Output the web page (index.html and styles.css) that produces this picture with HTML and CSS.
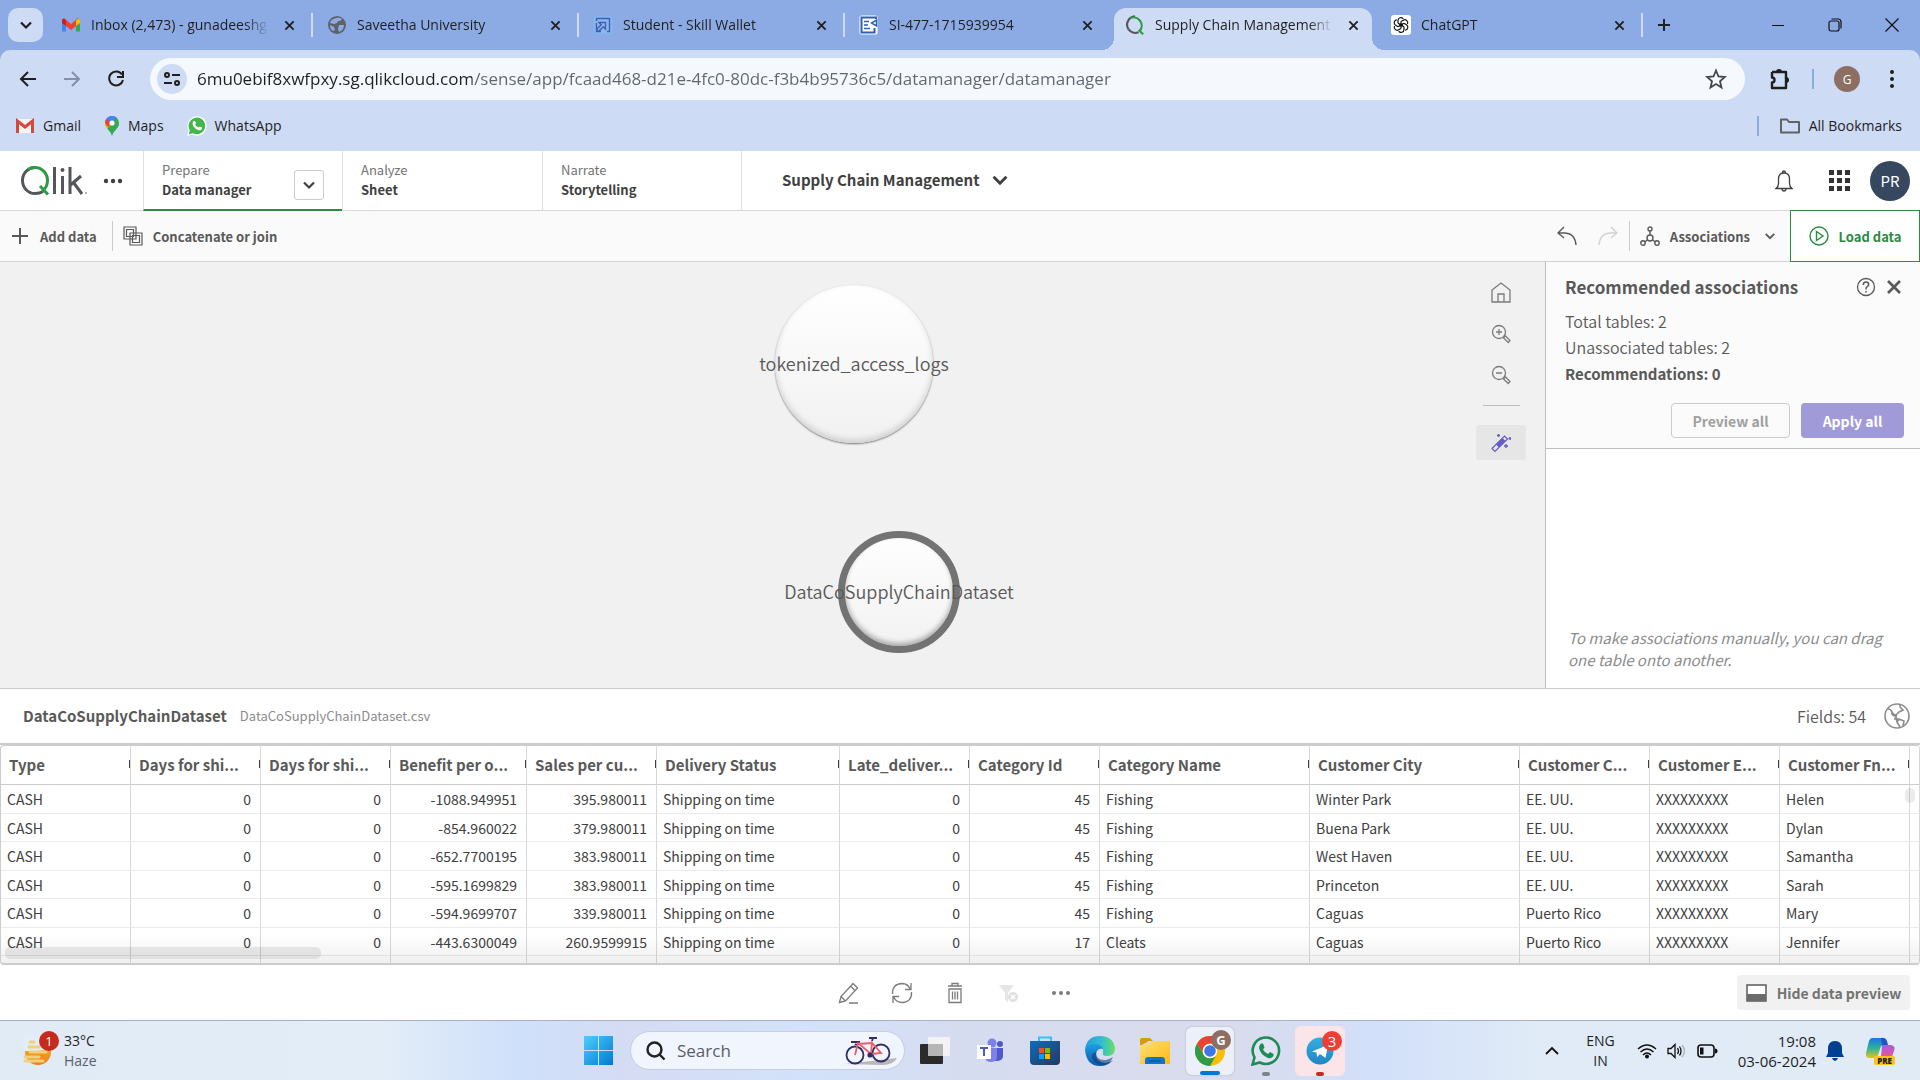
FILE: index.html
```html
<!DOCTYPE html>
<html lang="en">
<head>
<meta charset="utf-8">
<title>Supply Chain Management</title>
<link rel="stylesheet" href="styles.css">
</head>
<body>
<svg class="defs" aria-hidden="true">
  <symbol id="x" viewBox="0 0 12 12"><path d="M1.5 1.5l9 9M10.5 1.5l-9 9" fill="none" stroke="currentColor" stroke-width="2"/></symbol>
  <symbol id="down" viewBox="0 0 14 14"><path d="M2 4.5l5 5 5-5" fill="none" stroke="currentColor" stroke-width="2.2"/></symbol>
  <symbol id="qring" viewBox="0 0 28 28"><path d="M5 20A11.5 11.5 0 0 1 14 2" fill="none" stroke="#54565b" stroke-width="3"/><path d="M5 20A11.5 11.5 0 0 0 19 24" fill="none" stroke="#54565b" stroke-width="3"/><path d="M7 4.5A11.5 11.5 0 0 1 20 23M19 21l6.500 6" fill="none" stroke="#2f9a45" stroke-width="3"/></symbol>
  <linearGradient id="win" x1="0" y1="0" x2="1" y2="1"><stop offset="0" stop-color="#4cd0fb"/><stop offset="1" stop-color="#0078d4"/></linearGradient>
  <linearGradient id="store" x1="0" y1="0" x2="1" y2="1"><stop offset="0" stop-color="#0f6cbd"/><stop offset="1" stop-color="#243a5e"/></linearGradient>
  <linearGradient id="edge1" x1="0" y1="0" x2="1" y2="0"><stop offset="0" stop-color="#2499e6"/><stop offset=".6" stop-color="#35c1c9"/><stop offset="1" stop-color="#6be05c"/></linearGradient>
  <linearGradient id="edge2" x1="0" y1="0" x2="0" y2="1"><stop offset="0" stop-color="#1f9de6"/><stop offset="1" stop-color="#0c59a4"/></linearGradient>
  <linearGradient id="fold" x1="0" y1="0" x2="1" y2="1"><stop offset="0" stop-color="#ffe07a"/><stop offset="1" stop-color="#fdb913"/></linearGradient>
  <linearGradient id="tele" x1="0" y1="0" x2="0" y2="1"><stop offset="0" stop-color="#37aee2"/><stop offset="1" stop-color="#1e87c4"/></linearGradient>
  <linearGradient id="cop1" x1="0" y1="0" x2="0" y2="1"><stop offset="0" stop-color="#1b74e4"/><stop offset=".5" stop-color="#2bb39b"/><stop offset="1" stop-color="#e3c51c"/></linearGradient>
  <linearGradient id="cop2" x1="0" y1="0" x2="0" y2="1"><stop offset="0" stop-color="#a45de0"/><stop offset=".6" stop-color="#e8569b"/><stop offset="1" stop-color="#f78f3e"/></linearGradient>
  <linearGradient id="sun" x1="0" y1="0" x2="0" y2="1"><stop offset="0" stop-color="#f8b92a"/><stop offset="1" stop-color="#ef7d1a"/></linearGradient>
</svg>

<header class="browser">
  <div class="tabstrip">
    <button class="tab-search" aria-label="Search tabs"><svg width="14" height="14"><use href="#down"/></svg></button>
    <div class="tabs">
      <div class="tab">
        <svg width="20" height="16" viewBox="0 0 20 16"><path d="M1 3v11.500h4V7z" fill="#4285f4"/><path d="M19 3v11.500h-4V7z" fill="#34a853"/><path d="M1 3v3l9 7 9-7V3l-2-2-7 6-7-6z" fill="#ea4335"/><path d="M15 3.500V9l4-3V3q-1.500-2.500-4 .5z" fill="#fbbc04"/><path d="M5 3.500V9L1 6V3q1.500-2.500 4 .5z" fill="#c5221f"/></svg>
        <span class="tab-title">Inbox (2,473) - gunadeeshg</span><button class="tab-close" aria-label="Close tab"><svg width="11" height="11"><use href="#x"/></svg></button>
      </div>
      <span class="tab-divider"></span>
      <div class="tab">
        <svg width="20" height="20" viewBox="0 0 20 20"><circle cx="10" cy="10" r="9" fill="#5f6368"/><path d="M9 3q4-1 6 1l-2 2-2 0-1 2-3 1-4-1q1-4 6-5zM12 10l5 0q0 5-5 7l-1-3zM3 10l4 2 1 3-2 1q-3-2-3-6z" fill="#8cabe4"/></svg>
        <span class="tab-title">Saveetha University</span><button class="tab-close" aria-label="Close tab"><svg width="11" height="11"><use href="#x"/></svg></button>
      </div>
      <span class="tab-divider"></span>
      <div class="tab">
        <svg width="20" height="20" viewBox="0 0 20 20"><rect x="1" y="1" width="18" height="18" rx="2" fill="#8fb7ee" stroke="#7db4f2"/><path d="M3.500 6V3.500h13v13H14M6 7.500h6.500V14l-2.200-2.200L5.500 16.500 3.500 14.500 8.200 9.700zM3.500 8v8.500H8" fill="none" stroke="#3b61b0" stroke-width="1.400"/></svg>
        <span class="tab-title">Student - Skill Wallet</span><button class="tab-close" aria-label="Close tab"><svg width="11" height="11"><use href="#x"/></svg></button>
      </div>
      <span class="tab-divider"></span>
      <div class="tab">
        <svg width="20" height="20" viewBox="0 0 20 20"><rect x=".5" y=".5" width="18" height="19" rx="2" fill="#fff"/><path d="M17 4V2.500H2.500v15h13V13" fill="none" stroke="#2a63b5" stroke-width="2"/><path d="M5 6.500h5M5 10h4M5 13.500h6" stroke="#2a63b5" stroke-width="1.500"/><path d="M17.500 5v6l-5-3z" fill="none" stroke="#2a63b5" stroke-width="1.500"/></svg>
        <span class="tab-title">SI-477-1715939954</span><button class="tab-close" aria-label="Close tab"><svg width="11" height="11"><use href="#x"/></svg></button>
      </div>
      <span class="tab-divider hidden"></span>
      <div class="tab active">
        <svg width="20" height="20"><use href="#qring"/></svg>
        <span class="tab-title">Supply Chain Management</span><button class="tab-close" aria-label="Close tab"><svg width="11" height="11"><use href="#x"/></svg></button>
      </div>
      <span class="tab-divider hidden"></span>
      <div class="tab">
        <svg width="20" height="20" viewBox="0 0 20 20"><rect width="20" height="20" rx="3" fill="#fff"/><g fill="none" stroke="#111" stroke-width="1.200"><path id="petal" d="M7 8.300V5.500a2.900 2.900 0 0 1 5.300-1.600M7 8.300l4.800 2.800"/><use href="#petal" transform="rotate(60 10 10)"/><use href="#petal" transform="rotate(120 10 10)"/><use href="#petal" transform="rotate(180 10 10)"/><use href="#petal" transform="rotate(240 10 10)"/><use href="#petal" transform="rotate(300 10 10)"/></g></svg>
        <span class="tab-title">ChatGPT</span><button class="tab-close" aria-label="Close tab"><svg width="11" height="11"><use href="#x"/></svg></button>
      </div>
      <span class="tab-divider"></span>
      <button class="new-tab" aria-label="New tab"><svg width="14" height="14"><path d="M7 1v12M1 7h12" stroke="#1c2230" stroke-width="2"/></svg></button>
    </div>
    <div class="window-controls">
      <button aria-label="Minimize"><svg width="14" height="14"><path d="M1 7.500h12" stroke="#111"/></svg></button>
      <button aria-label="Restore"><svg width="14" height="14" fill="none" stroke="#111" stroke-width="1.200"><rect x="1" y="3" width="10" height="10" rx="2"/><path d="M3.500 1H10q3 0 3 3v6.500"/></svg></button>
      <button aria-label="Close"><svg width="14" height="14"><path d="M.5.5l13 13M13.500.5l-13 13" stroke="#111" stroke-width="1.200"/></svg></button>
    </div>
  </div>

  <div class="toolbar">
    <div class="address-row">
      <button class="nav" aria-label="Back"><svg width="18" height="18" fill="none" stroke="#1f1f1f" stroke-width="2"><path d="M17 9H2M9 2L2 9l7 7"/></svg></button>
      <button class="nav" aria-label="Forward"><svg width="18" height="18" fill="none" stroke="#8590a8" stroke-width="2"><path d="M1 9h15M9 2l7 7-7 7"/></svg></button>
      <button class="nav" aria-label="Reload"><svg width="18" height="18" fill="none" stroke="#1f1f1f" stroke-width="2"><path d="M15 4.500A7 7 0 1 0 16 10M16 1v6h-6"/></svg></button>
      <div class="omnibox">
        <button class="site-info" aria-label="Site information"><svg width="18" height="18" fill="none" stroke="#1f1f1f" stroke-width="2"><circle cx="4" cy="5" r="2"/><path d="M9 5h8M1 13h8"/><circle cx="14" cy="13" r="2"/></svg></button>
        <input class="url" type="text" aria-label="Address" value="6mu0ebif8xwfpxy.sg.qlikcloud.com/sense/app/fcaad468-d21e-4fc0-80dc-f3b4b95736c5/datamanager/datamanager">
        <button aria-label="Bookmark this tab"><svg width="22" height="22" viewBox="0 0 22 22"><path d="M11 2.500l2.500 6 6.300.5-4.800 4.200 1.500 6.300-5.500-3.400-5.500 3.400L7 13.200 2.200 9l6.300-.5z" fill="none" stroke="#44474e" stroke-width="1.800"/></svg></button>
      </div>
      <button class="ext" aria-label="Extensions"><svg width="24" height="24" viewBox="0 0 24 24"><path d="M4 5h14v5.500M4 5v5.500q2.500 0 2.500 2.500T4 15.500V21h14v-5" fill="none" stroke="#1f1f1f" stroke-width="2.400" stroke-linejoin="round"/><path d="M8 5a3 3 0 0 1 6 0zM18 10a3 3 0 0 1 0 6z" fill="#1f1f1f"/><path d="M18 10v6" stroke="#1f1f1f" stroke-width="2.400"/></svg></button>
      <span class="bar"></span>
      <button class="profile" aria-label="Profile">G</button>
      <button class="menu" aria-label="Chrome menu"><svg width="6" height="20" fill="#1f1f1f"><circle cx="3" cy="3" r="2"/><circle cx="3" cy="10" r="2"/><circle cx="3" cy="17" r="2"/></svg></button>
    </div>
    <nav class="bookmarks">
      <a href="#"><svg width="20" height="16" viewBox="0 0 20 16"><rect x="1" y="1" width="18" height="14" fill="#f4f4f4"/><path d="M2.500 15V3l7.500 6 7.500-6v12" fill="none" stroke="#d5483c" stroke-width="3"/></svg>Gmail</a>
      <a href="#" class="maps"><svg width="16" height="20" viewBox="0 0 16 20"><path d="M8 0a7 7 0 0 1 7 7q0 3-3 6.500-3 3-4 6.500-1-3.500-4-6.500-3-3.500-3-6.500a7 7 0 0 1 7-7z" fill="#34a853"/><path d="M8 0a7 7 0 0 0-7 7l2 4L13 2q-2-2-5-2z" fill="#4285f4"/><path d="M1 7q0 3 2.500 5.500L8 8z" fill="#fbbc04"/><path d="M2.500 2.800L8 7 4 11Q1 8 1 6z" fill="#ea4335"/><path d="M4 12l8-9q4 4 2 8l-4 4z" fill="#34a853"/><circle cx="8" cy="7" r="2.600" fill="#fff"/></svg>Maps</a>
      <a href="#" class="wa"><svg width="20" height="20" viewBox="0 0 20 20"><path d="M0 20l1.500-5.500A9.700 9.700 0 1 1 5.500 18.500z" fill="#fff"/><path d="M1.800 18.200l1-4A8.300 8.300 0 1 1 6 17.200z" fill="#45b649"/><path d="M6.500 5l1.500 0 1 2.500-1 1q1 2 3.500 3l1-1 2.500 1v1.500q-1.500 2-4 1Q6.500 12 5.500 8q0-2 1-3z" fill="#fff"/></svg>WhatsApp</a>
      <span class="bar"></span>
      <a href="#" class="all"><svg width="22" height="18" viewBox="0 0 22 18"><path d="M2 15.500v-13h6l2 2.500h10v10.500z" fill="none" stroke="#5f6368" stroke-width="2" stroke-linejoin="round"/></svg>All Bookmarks</a>
    </nav>
  </div>
</header>

<main class="app">
  <header class="app-header">
    <div class="brand">
      <svg width="68" height="30" viewBox="0 0 68 30" role="img" aria-label="Qlik"><path d="M15 1.500A12.500 13 0 0 0 15 27.500M15 27.500q5 0 8-2" fill="none" stroke="#54565b" stroke-width="3"/><path d="M15 1.500c7 0 12.500 6 12.500 13 0 6-3 9-5.500 10.500M20 20l8 8.500M8 3.500q3-2 7-2" fill="none" stroke="#2f9a45" stroke-width="3"/><path d="M34.500 1v27M42.500 10v18M50 1v27M61 10L50.500 19M53.500 16.500L62 28" fill="none" stroke="#54565b" stroke-width="3"/><circle cx="42.500" cy="4" r="2" fill="#54565b"/><circle cx="66" cy="27" r=".8" fill="#54565b"/></svg>
      <button aria-label="More"><svg width="20" height="6" fill="#404040"><circle cx="3" cy="3" r="2.200"/><circle cx="10" cy="3" r="2.200"/><circle cx="17" cy="3" r="2.200"/></svg></button>
    </div>
    <nav class="stages">
      <div class="stage current"><a href="#"><small>Prepare</small><b>Data manager</b></a><button aria-label="Open menu"><svg width="14" height="14"><use href="#down"/></svg></button></div>
      <div class="stage"><a href="#"><small>Analyze</small><b>Sheet</b></a></div>
      <div class="stage"><a href="#"><small>Narrate</small><b>Storytelling</b></a></div>
    </nav>
    <button class="app-title">Supply Chain Management<svg width="18" height="18"><use href="#down"/></svg></button>
    <div class="app-actions">
      <button aria-label="Notifications"><svg width="18" height="22" viewBox="0 0 18 22" fill="none" stroke="#404040" stroke-width="1.300"><path d="M1 18.500h16q-2.500-2-2.500-5V9Q14.500 3 9 3T3.500 9v4.500q0 3-2.500 5zM7.500 3q0-2 1.500-2t1.500 2M7 18.500q0 2.500 2 2.500t2-2.500"/></svg></button>
      <button aria-label="Launcher"><svg width="21" height="21" fill="#333"><path d="M0 0h5v5H0zM8 0h5v5H8zM16 0h5v5h-5zM0 8h5v5H0zM8 8h5v5H8zM16 8h5v5h-5zM0 16h5v5H0zM8 16h5v5H8zM16 16h5v5h-5z"/></svg></button>
      <button class="avatar" aria-label="Account">PR</button>
    </div>
  </header>

  <div class="actionbar">
    <button class="tool"><svg width="16" height="16"><path d="M8 0v16M0 8h16" stroke="#595959" stroke-width="2"/></svg>Add data</button>
    <span class="rule"></span>
    <button class="tool join"><svg width="20" height="20" fill="none" stroke="#595959" stroke-width="1.200"><path d="M1 1h12v12H1zM3.500 3.500h7v7h-7zM7 7h12v12H7zM9.500 9.500h7v7h-7z"/></svg>Concatenate or join</button>
    <div class="right">
      <button class="hist" aria-label="Undo"><svg width="20" height="20" fill="none" stroke="#595959" stroke-width="1.400"><path d="M7 1L1 7l6 5M1 7h6q11 0 12 12"/></svg></button>
      <button class="hist" aria-label="Redo"><svg width="20" height="20" fill="none" stroke="#d2d2d2" stroke-width="1.400"><path d="M13 1l6 6-6 5M19 7h-6Q2 7 1 19"/></svg></button>
      <span class="rule"></span>
      <button class="tool assoc"><svg width="20" height="20" fill="none" stroke="#595959" stroke-width="1.400"><circle cx="10" cy="3" r="2"/><circle cx="3" cy="17" r="2.200"/><circle cx="17" cy="17" r="2.200"/><circle cx="10" cy="12" r="3"/><path d="M10 5v4M7.500 14l-3 2M12.500 14l3 2"/></svg>Associations<svg class="chev" width="12" height="12"><use href="#down"/></svg></button>
      <button class="load"><svg width="20" height="20" fill="none" stroke="#2d8a43" stroke-width="1.400"><circle cx="10" cy="10" r="9"/><path d="M7.500 5.500v9l6.500-4.500z"/></svg>Load data</button>
    </div>
  </div>

  <section class="workspace">
    <div class="canvas">
      <div class="node logs"><span>tokenized_access_logs</span></div>
      <div class="node dataset"><span>DataCoSupplyChainDataset</span></div>
      <div class="canvas-tools">
        <button aria-label="Home"><svg width="20" height="21" fill="none" stroke="#7b7b7b" stroke-width="1.300"><path d="M1 8l9-7 9 7v12H1zM7 20v-8h6v8"/></svg></button>
        <button aria-label="Zoom in"><svg width="20" height="20" fill="none" stroke="#7b7b7b" stroke-width="1.300"><circle cx="8" cy="8" r="6.500"/><path d="M8 5v6M5 8h6M12.500 14l2-2 4.500 4.500-1.700 2z"/></svg></button>
        <button aria-label="Zoom out"><svg width="20" height="20" fill="none" stroke="#7b7b7b" stroke-width="1.300"><circle cx="8" cy="8" r="6.500"/><path d="M5 8h6M12.500 14l2-2 4.500 4.500-1.700 2z"/></svg></button>
        <hr>
        <button class="wand" aria-label="Recommended associations"><svg width="20" height="20" viewBox="0 0 20 20"><path d="M1 15.500L13.500 3l3 3L4 18.500z" fill="none" stroke="#655dc6" stroke-width="1.200"/><path d="M5 11.500L11.500 5l3 3L8 14.500z" fill="#655dc6"/><path d="M7.500 1v3M6 2.500h3M19 4v3M17.500 5.500h3M15 11v4M13 13h4" stroke="#655dc6" stroke-width="1.300"/></svg></button>
      </div>
    </div>
    <aside class="panel">
      <div class="panel-head">
        <div class="panel-title"><h2>Recommended associations</h2>
          <button aria-label="Help"><svg width="20" height="20" fill="none" stroke="#595959" stroke-width="1.300"><circle cx="10" cy="10" r="8.500"/><path d="M7.300 8q0-3 2.700-3t2.700 2.500q0 1.300-1.500 2.200T10 12.500M10 14v1.500" stroke-width="1.500"/></svg></button>
          <button aria-label="Close"><svg width="16" height="16"><use href="#x"/></svg></button>
        </div>
        <p>Total tables: 2</p>
        <p>Unassociated tables: 2</p>
        <p><b>Recommendations: 0</b></p>
        <div class="panel-buttons"><button class="preview" disabled>Preview all</button><button class="apply" disabled>Apply all</button></div>
      </div>
      <p class="hint">To make associations manually, you can drag one table onto another.</p>
    </aside>
  </section>

  <section class="data">
    <div class="data-head">
      <h3>DataCoSupplyChainDataset</h3><span class="file">DataCoSupplyChainDataset.csv</span>
      <span class="fields">Fields: 54</span>
      <svg width="26" height="26" viewBox="0 0 26 26" fill="none" stroke="#8c8c8c" stroke-width="1.600"><circle cx="13" cy="13" r="12"/><path d="M4 6q3 0 4 3t4 3l3-3 4-2-3-3 0-3M8 9q-1 4 4 4l-1 3 4 0 5 2-1 5M15 16l-2 3 3 5M12 13l1 6"/></svg>
    </div>
    <div class="grid">
      <table>
        <colgroup><col class="c-s"><col class="c-s"><col class="c-s"><col class="c-m"><col class="c-s"><col class="c-l"><col class="c-s"><col class="c-s"><col class="c-xl"><col class="c-xl"><col class="c-s"><col class="c-s"><col class="c-s"><col></colgroup>
        <thead><tr><th>Type</th><th>Days for shi...</th><th>Days for shi...</th><th>Benefit per o...</th><th>Sales per cu...</th><th>Delivery Status</th><th>Late_deliver...</th><th>Category Id</th><th>Category Name</th><th>Customer City</th><th>Customer C...</th><th>Customer E...</th><th>Customer Fn...</th><th></th></tr></thead>
        <tbody>
          <tr><td>CASH</td><td class="n">0</td><td class="n">0</td><td class="n">-1088.949951</td><td class="n">395.980011</td><td>Shipping on time</td><td class="n">0</td><td class="n">45</td><td>Fishing</td><td>Winter Park</td><td>EE. UU.</td><td>XXXXXXXXX</td><td>Helen</td><td></td></tr>
          <tr><td>CASH</td><td class="n">0</td><td class="n">0</td><td class="n">-854.960022</td><td class="n">379.980011</td><td>Shipping on time</td><td class="n">0</td><td class="n">45</td><td>Fishing</td><td>Buena Park</td><td>EE. UU.</td><td>XXXXXXXXX</td><td>Dylan</td><td></td></tr>
          <tr><td>CASH</td><td class="n">0</td><td class="n">0</td><td class="n">-652.7700195</td><td class="n">383.980011</td><td>Shipping on time</td><td class="n">0</td><td class="n">45</td><td>Fishing</td><td>West Haven</td><td>EE. UU.</td><td>XXXXXXXXX</td><td>Samantha</td><td></td></tr>
          <tr><td>CASH</td><td class="n">0</td><td class="n">0</td><td class="n">-595.1699829</td><td class="n">383.980011</td><td>Shipping on time</td><td class="n">0</td><td class="n">45</td><td>Fishing</td><td>Princeton</td><td>EE. UU.</td><td>XXXXXXXXX</td><td>Sarah</td><td></td></tr>
          <tr><td>CASH</td><td class="n">0</td><td class="n">0</td><td class="n">-594.9699707</td><td class="n">339.980011</td><td>Shipping on time</td><td class="n">0</td><td class="n">45</td><td>Fishing</td><td>Caguas</td><td>Puerto Rico</td><td>XXXXXXXXX</td><td>Mary</td><td></td></tr>
          <tr><td>CASH</td><td class="n">0</td><td class="n">0</td><td class="n">-443.6300049</td><td class="n">260.9599915</td><td>Shipping on time</td><td class="n">0</td><td class="n">17</td><td>Cleats</td><td>Caguas</td><td>Puerto Rico</td><td>XXXXXXXXX</td><td>Jennifer</td><td></td></tr>
          <tr><td></td><td></td><td></td><td></td><td></td><td></td><td></td><td></td><td></td><td></td><td></td><td></td><td></td><td></td></tr>
        </tbody>
      </table>
      <span class="thumb-h"></span><span class="thumb-v"></span>
    </div>
    <div class="data-foot">
      <span></span>
      <div class="foot-icons">
        <button aria-label="Edit"><svg width="22" height="22" viewBox="0 0 22 22" fill="none" stroke="#7b7b7b" stroke-width="1.300"><path d="M1.500 20.500l1.500-6L15 1.500l4.500 4.500L7.500 19zM3 14.500L7.500 19M12.500 4l4.500 4.500M11 21h9"/></svg></button>
        <button aria-label="Reload"><svg width="22" height="22" viewBox="0 0 22 22" fill="none" stroke="#7b7b7b" stroke-width="1.300"><path d="M1.500 12Q1 2 11 1.500q6 0 8.500 6M20 1v6.500h-6M20.500 10Q21 20 11 20.500q-6 0-8.500-6M2 21v-6.500h6"/></svg></button>
        <button aria-label="Delete"><svg width="22" height="22" viewBox="0 0 22 22" fill="none" stroke="#7b7b7b" stroke-width="1.300"><path d="M4 4h14M8 3.500V1.500h6v2M5 7h12v13.500H5zM8.500 9.500v8M11 9.500v8M13.500 9.500v8"/></svg></button>
        <button aria-label="Clear filter" disabled><svg width="22" height="22" viewBox="0 0 22 22"><path d="M2 3h15l-6 8v9l-3-2v-7z" fill="#e6e6e6"/><circle cx="16" cy="15" r="5" fill="#e0e0e0"/><path d="M14 13l4 4M18 13l-4 4" stroke="#fff" stroke-width="1.600"/></svg></button>
        <button aria-label="More"><svg width="22" height="22" viewBox="0 0 22 22" fill="#7b7b7b"><circle cx="4" cy="11" r="2"/><circle cx="11" cy="11" r="2"/><circle cx="18" cy="11" r="2"/></svg></button>
      </div>
      <button class="hide"><svg width="21" height="18"><path d="M1 1h19v16H1z" fill="#fff" stroke="#595959" stroke-width="1.500"/><path d="M1 10h19v7H1z" fill="#6b6b6b"/></svg>Hide data preview</button>
    </div>
  </section>
</main>

<footer class="taskbar">
  <div class="weather">
    <span class="weather-icon"><svg width="30" height="34" viewBox="0 0 30 34"><circle cx="15" cy="18" r="13" fill="url(#sun)"/><path d="M0 0h30v15L14 17H0z" fill="#e3edf8"/><path d="M7 8h4M6 13h10M7 18h16M2 23h14M2 27h18" stroke="#f0cf7d" stroke-width="3" stroke-linecap="round"/></svg><i>1</i></span>
    <div><span>33°C</span><span class="dim">Haze</span></div>
  </div>
  <div class="dock">
    <button class="app-icon" aria-label="Start"><svg width="30" height="30"><path d="M0 0h14v14H0zM15 0h14v14H15zM0 15h14v14H0zM15 15h14v14H15z" fill="url(#win)"/></svg></button>
    <label class="search"><svg width="20" height="20" fill="none" stroke="#222" stroke-width="2.400"><circle cx="8.500" cy="8.500" r="7"/><path d="M13.500 13.500l5 5"/></svg><input type="search" placeholder="Search" aria-label="Search">
      <svg width="56" height="34" viewBox="0 0 56 34" fill="none"><path d="M2 30l52-6q-4 7-14 7z" fill="#b9b6b8"/><g stroke="#2e2f63" stroke-width="1.800"><circle cx="12" cy="21" r="8.500"/><circle cx="38" cy="19" r="8.500"/><path d="M8 8h8q-1 4-4 2M26 4h8M30 4l-1 3"/></g><path d="M12 21l3-12 13 11 10-1-9-10-1 11M15 10l14-1" stroke="#ee5a6a" stroke-width="1.800"/><circle cx="27" cy="21" r="2.600" fill="#2e2f63"/></svg></label>
    <button class="app-icon" aria-label="Task view"><svg width="30" height="30"><rect x="0" y="8" width="23" height="20" rx="1" fill="#2b2b2b"/><rect x="8" y="1" width="22" height="19" rx="1" fill="#f3f3f3"/><path d="M8 8h15v12H8z" fill="#b5b5b5"/></svg></button>
    <button class="app-icon" aria-label="Teams"><svg width="28" height="28"><circle cx="16" cy="6" r="4.500" fill="#7b83eb"/><circle cx="24" cy="7" r="3" fill="#5059c9"/><path d="M18 11h9v8q0 4-5 5h-4z" fill="#5059c9"/><path d="M9 11h12v8q0 6-6 6t-6-6z" fill="#7b83eb"/><path d="M1 8h14v14H1z" fill="#fff"/><path d="M4 11h8M8 11v8" stroke="#5059c9" stroke-width="2"/></svg></button>
    <button class="app-icon" aria-label="Store"><svg width="30" height="30"><path d="M9 6V1.500h12V6" fill="none" stroke="#35c3f3" stroke-width="2"/><path d="M0 5h30v20q0 4-4 4H4q-4 0-4-4z" fill="url(#store)"/><path d="M9 12h5v5H9z" fill="#f25022"/><path d="M15 12h5v5h-5z" fill="#7fba00"/><path d="M9 18h5v5H9z" fill="#00a4ef"/><path d="M15 18h5v5h-5z" fill="#ffb900"/></svg></button>
    <button class="app-icon" aria-label="Edge"><svg width="30" height="30" viewBox="0 0 30 30"><path d="M0 13Q2 0 15 0t15 12q0 8-8 8-5 0-4-3 1-8-8-8-7 0-10 4z" fill="url(#edge1)"/><path d="M0 13q3-5 10-5 6 0 8 5-6-1-7 5 0 8 9 9 4 0 8-3-5 6-13 6Q1 30 0 13z" fill="url(#edge2)"/><path d="M11 16q0 9 10 8 4-1 7-3-2 5-8 8-11 0-13-7-1-5 4-6z" fill="#123f7f" opacity=".6"/></svg></button>
    <button class="app-icon" aria-label="File Explorer"><svg width="30" height="28"><path d="M0 3q0-2 2-2h8l3 3h-4L0 9z" fill="#d89c05"/><path d="M0 8q6 0 9-2l3-2h18v23H0z" fill="url(#fold)"/><path d="M5 27v-4q0-3 3-3h14q3 0 3 3v4z" fill="#1173c9"/><path d="M9 24h12" stroke="#0a4a8f"/></svg></button>
    <button class="app-icon tile on" aria-label="Chrome"><svg width="30" height="30" viewBox="0 0 30 30"><circle cx="15" cy="15" r="15" fill="#fbbc04"/><path d="M2 7.500A15 15 0 0 1 28 7.500H15a7.500 7.500 0 0 0-6.500 11z" fill="#ea4335"/><path d="M2 7.500l6.500 11a7.500 7.500 0 0 0 13 0L15 30A15 15 0 0 1 2 7.500z" fill="#2e9b4b"/><circle cx="15" cy="15" r="7.300" fill="#fff"/><circle cx="15" cy="15" r="5.800" fill="#3b78e7"/></svg><i class="badge brown">G</i></button>
    <button class="app-icon run" aria-label="WhatsApp"><svg width="30" height="30" viewBox="0 0 30 30"><path d="M1.500 28.500l2-7A13.200 13.200 0 1 1 8.800 26.500z" fill="#fff" fill-opacity=".2" stroke="#1d8c57" stroke-width="2.600"/><path d="M10 7.500h2l1.500 4-1.500 2q1.500 3 5 4.500l2-2 3.500 2v2q-2 3-5.500 2Q9.500 19 8 12q0-3 2-4.500z" fill="#1d8c57"/></svg></button>
    <button class="app-icon tile alert" aria-label="Telegram"><svg width="28" height="28"><circle cx="14" cy="14" r="13.500" fill="url(#tele)"/><path d="M6 14.500l16-6.500-2.500 13-5.500-4-3 3-.5-4.500z" fill="#fff"/></svg><i class="badge red">3</i></button>
  </div>
  <div class="tray">
    <button aria-label="Show hidden icons"><svg width="14" height="10"><path d="M1 8l6-6 6 6" fill="none" stroke="#111" stroke-width="1.800"/></svg></button>
    <button class="lang"><span>ENG</span><span>IN</span></button>
    <button class="quick" aria-label="Network, volume, battery"><svg width="20" height="16" fill="none" stroke="#111" stroke-width="1.400"><path d="M1 6q9-8 18 0M3.500 9q6.500-6 13 0M6 12q4-4 8 0"/><circle cx="10" cy="13.500" r="1.300" fill="#111"/></svg><svg width="20" height="16" fill="none" stroke="#111" stroke-width="1.300"><path d="M1 5.500h3L8 1.500v13l-4-4H1z"/><path d="M10.500 5q2 3 0 6M12.500 3.500q3 4.500 0 9"/><path d="M15 2q5 6 0 12" stroke="#aab2bf"/></svg><svg width="21" height="14"><rect x="1" y="1" width="16" height="12" rx="3" fill="none" stroke="#111" stroke-width="1.600"/><rect x="3" y="3.500" width="3.500" height="7" fill="#111"/><path d="M18 4.500q2.500 0 2.500 2.500T18 9.500z" fill="#111"/></svg></button>
    <button class="clock"><span>19:08</span><span>03-06-2024</span></button>
    <button aria-label="Notifications"><svg width="18" height="20"><path d="M0 16l2-4V8q0-8 7-8t7 8v4l2 4z" fill="#003e92"/><path d="M6 17h6q-1 3-3 3t-3-3z" fill="#003e92"/></svg></button>
    <button class="copilot" aria-label="Copilot"><svg width="29" height="30"><path d="M6 2h10q3 0 4 4l1 3-6 1-3 9q-1 3-4 3H3q-4-1-3-5L3 5q1-3 3-3z" fill="url(#cop1)"/><path d="M15 2q4-1 6 3l1 4h-6z" fill="#2153c6"/><path d="M16 9h9q5 1 3 6l-3 8q-1 4-5 4h-9q3-1 4-6z" fill="url(#cop2)"/></svg><i>PRE</i></button>
  </div>
</footer>
</body>
</html>
```
FILE: styles.css
```css
* { box-sizing: border-box; }
body {
  margin: 0;
  min-height: 100vh;
  display: flex;
  flex-direction: column;
  font-family: "Open Sans", sans-serif;
  font-size: 14px;
  color: #1f1f1f;
  background: #fff;
}
button, input { font: inherit; color: inherit; background: none; border: 0; padding: 0; margin: 0; outline: 0; }
button { display: flex; align-items: center; justify-content: center; }
a { color: inherit; text-decoration: none; }
svg { flex: none; display: block; }
i { font-style: normal; }
h2, h3, p { margin: 0; }
.defs { position: absolute; width: 0; height: 0; }

/* browser chrome */
.browser { background: #8cabe4; }
.tabstrip { display: flex; height: 50px; padding-left: 8px; align-items: flex-start; }
.tab-search { width: 35px; height: 34px; margin: 8px 7px 0 0; border-radius: 10px; background: #cedbf5; }
.tabs { display: flex; flex: 1; min-width: 0; height: 42px; margin-top: 8px; }
.tab { display: flex; align-items: center; flex: 0 1 258px; min-width: 0; padding: 0 9px 8px 11px; gap: 10px; position: relative; }
.tab-title { flex: 1; overflow: hidden; white-space: nowrap; line-height: 20px; mask-image: linear-gradient(90deg, #000 calc(100% - 24px), transparent); }
.tab-close { width: 20px; height: 20px; }
.tab.active { background: #cedbf5; border-radius: 12px 12px 0 0; }
.tab.active::before, .tab.active::after { content: ""; position: absolute; bottom: 0; width: 12px; height: 12px; }
.tab.active::before { right: 100%; background: radial-gradient(circle at 0 0, transparent 12px, #cedbf5 12px); }
.tab.active::after { left: 100%; background: radial-gradient(circle at 100% 0, transparent 12px, #cedbf5 12px); }
.tab-divider { flex: none; width: 2px; height: 24px; margin: 5px 3px; background: #cedbf5; }
.tab-divider.hidden { background: none; }
.new-tab { width: 30px; height: 34px; margin-left: 3px; }
.window-controls { display: flex; }
.window-controls button { width: 57px; height: 50px; }

.toolbar { background: #cedbf5; border-radius: 10px 10px 0 0; padding-top: 8px; }
.address-row { display: flex; align-items: center; height: 42px; padding: 0 8px 0 6px; }
.nav { width: 44px; height: 42px; }
.omnibox { flex: 1; min-width: 0; height: 42px; margin-left: 12px; padding: 0 18px 0 7px; border-radius: 21px; background: #f5f9fe; display: flex; align-items: center; }
.site-info { width: 30px; height: 30px; border-radius: 15px; background: #cedbf5; }
.url {
  flex: 1; min-width: 0; margin-left: 10px; font-size: 17px; line-height: 24px;
  background: linear-gradient(90deg, #1f1f1f 275px, #5f6670 275px);
  background-clip: text; -webkit-background-clip: text; -webkit-text-fill-color: transparent;
}
.ext { width: 38px; height: 38px; margin-left: 16px; }
.bar { width: 2px; height: 20px; background: #8cabe4; }
.address-row .bar { margin: 0 20px 0 13px; }
.profile { width: 26px; height: 26px; border-radius: 13px; background: #8d6e63; color: #fff; font-size: 12px; }
.menu { width: 40px; margin-left: 12px; height: 38px; }
.bookmarks { display: flex; align-items: center; height: 51px; padding: 0 18px 0 15px; }
.bookmarks a { display: flex; align-items: center; gap: 8px; line-height: 20px; }
.bookmarks .maps, .bookmarks .wa { margin-left: 23px; }
.bookmarks .bar { margin-left: auto; margin-right: 20px; }

/* app header */
.app { flex: 1; display: flex; flex-direction: column; font-family: "Noto Sans CJK SC", sans-serif; color: #404040; }
.app-header { display: flex; height: 60px; border-bottom: 1px solid #d9d9d9; }
.brand { display: flex; align-items: center; gap: 15px; width: 143px; padding-left: 20px; }
.stages { display: flex; }
.stage { display: flex; align-items: center; width: 200px; padding: 0 18px 2px; border-left: 1px solid #e0e0e0; height: 60px; }
.stage:last-child { border-right: 1px solid #e0e0e0; }
.stage a { flex: 1; display: flex; flex-direction: column; line-height: 20px; font-size: 14px; }
.stage small { font-size: 13px; color: #737373; }
.stage b { font-size: 13px; }
.stage.current { width: 199px; padding-bottom: 0; border-bottom: 2px solid #2d8a43; }
.stage button { width: 30px; height: 30px; margin-top: 10px; border: 1px solid #ccc; border-radius: 3px; background: #fff; }
.app-title { margin-left: 40px; padding-bottom: 2px; font-size: 15px; font-weight: 700; gap: 11px; }
.app-actions { display: flex; align-items: center; margin-left: auto; padding-right: 10px; }
.app-actions button { margin-left: 36px; }
.app-actions .avatar { width: 40px; height: 40px; margin-left: 20px; border-radius: 20px; background: #35485f; color: #fff; font-size: 15px; }

.actionbar { display: flex; align-items: center; height: 51px; padding-left: 12px; background: #fafafa; border-bottom: 1px solid #d2d2d2; }
.tool { gap: 12px; font-size: 13px; font-weight: 700; color: #595959; }
.rule { width: 1px; height: 30px; background: #ccc; }
.actionbar > .rule { margin: 0 10px 0 15px; }
.join { gap: 10px; }
.right { display: flex; align-items: center; margin-left: auto; }
.hist { width: 41px; }
.right .rule { margin-right: 10px; }
.assoc { gap: 10px; padding-right: 14px; }
.assoc .chev { margin-left: 4px; }
.load { width: 130px; height: 52px; gap: 10px; border: 1px solid #2d8a43; background: #fff; color: #2d8a43; font-size: 13px; font-weight: 700; }

/* association canvas */
.workspace { flex: 1; display: flex; min-height: 427px; border-bottom: 1px solid #ccc; }
.canvas { flex: 1; position: relative; background: #f1f1f1; }
.node { position: absolute; display: flex; align-items: center; justify-content: center; border-radius: 50%; background: linear-gradient(#fff, #f1f1f1); font-size: 18px; font-weight: 350; color: #595959; white-space: nowrap; }
.node span { line-height: 24px; padding-bottom: 2px; }
.node.logs { left: 775px; top: 23px; width: 158px; height: 158px; box-shadow: 0 1px 2px rgba(0,0,0,.5), inset 0 -3px 6px rgba(0,0,0,.15); }
.node.dataset { left: 838px; top: 269px; width: 122px; height: 122px; border: 7px solid #737373; background-origin: border-box; box-shadow: inset 0 -3px 5px rgba(0,0,0,.3); }
.canvas-tools { position: absolute; top: 10px; right: 19px; width: 50px; display: flex; flex-direction: column; align-items: center; }
.canvas-tools button { width: 41px; height: 41px; }
.canvas-tools hr { width: 37px; height: 1px; margin: 10px 0 19px; border: 0; background: #bfbfbf; }
.canvas-tools .wand { width: 50px; height: 35px; border-radius: 3px; background: #e6e6e6; }

.panel { width: 375px; display: flex; flex-direction: column; justify-content: space-between; border-left: 1px solid #bfbfbf; background: #fff; color: #595959; font-size: 16px; line-height: 26px; }
.panel-head { padding: 12px 16px 10px 19px; background: #fbfbfb; border-bottom: 1px solid #bfbfbf; }
.panel-title { display: flex; align-items: center; margin-bottom: 8px; }
.panel-title h2 { flex: 1; font-size: 17px; line-height: 26px; font-weight: 700; }
.panel-title button + button { margin: 0 2px 0 10px; }
.panel-head p { font-weight: 350; }
.panel-head b { font-size: 15px; }
.panel-buttons { display: flex; justify-content: flex-end; gap: 11px; margin-top: 16px; }
.panel-buttons button { height: 35px; border-radius: 4px; font-size: 14px; font-weight: 700; }
.preview { width: 119px; border: 1px solid #ccc; color: #a0a0a0; }
.apply { width: 103px; background: #a09bd8; color: #fff; }
.hint { padding: 0 26px 17px 22px; font-size: 15px; font-style: italic; line-height: 22px; color: #8c8c8c; }

/* data preview */
.data-head { display: flex; align-items: center; height: 56px; padding: 0 10px 1px 23px; border-bottom: 2px solid #ccc; color: #595959; font-size: 16px; }
.data-head h3 { font-size: 15px; font-weight: 700; }
.data-head .file { margin-left: 13px; font-size: 13px; color: #8c8c8c; }
.fields { margin: 0 18px 0 auto; font-weight: 350; }
.grid { position: relative; height: 220px; overflow: hidden; border: 1px solid #ccc; border-width: 1px 0 2px 1px; border-radius: 4px; }
.grid::after { content: ""; position: absolute; inset: auto 0 0 0; height: 30px; background: linear-gradient(transparent, rgba(0,0,0,.06)); }
table { width: 100%; table-layout: fixed; border-collapse: separate; border-spacing: 0; }
.c-s { width: 130px; }
.c-m { width: 136px; }
.c-l { width: 183px; }
.c-xl { width: 210px; }
th, td { text-align: left; white-space: nowrap; overflow: hidden; border-right: 1px solid #d9d9d9; }
th { position: relative; height: 39px; padding: 0 4px 2px 8px; font-size: 15px; font-weight: 700; color: #595959; border-bottom: 1px solid #ccc; }
th:not(:last-child)::after { content: ""; position: absolute; right: 0; top: 14px; width: 1px; height: 8px; background: #404040; }
td { height: 28px; padding: 0 9px 0 6px; font-size: 14px; line-height: 20px; border-bottom: 1px solid #ebebeb; }
tr:nth-child(odd) td { height: 29px; }
.n { text-align: right; }
.thumb-h, .thumb-v { position: absolute; border-radius: 5px; background: rgba(0,0,0,.08); }
.thumb-h { left: 4px; bottom: 4px; width: 316px; height: 12px; }
.thumb-v { right: 5px; top: 42px; width: 10px; height: 15px; }
.data-foot { display: grid; grid-template-columns: 1fr auto 1fr; align-items: center; height: 55px; padding: 0 10px; }
.foot-icons { display: flex; gap: 31px; margin-right: 10px; }
.hide { justify-self: end; width: 173px; height: 35px; gap: 10px; border-radius: 4px; background: #f1f1f1; color: #737373; font-size: 14px; font-weight: 700; }

/* taskbar */
.taskbar { display: grid; grid-template-columns: 1fr auto 1fr; align-items: center; height: 60px; border-top: 1px solid #a9b1c0; background: linear-gradient(90deg, #e1ebf6, #e2edf8 20%, #cfe0fa 27%, #d5dcf4 33%, #d2e2fa 42%, #d6dcf0 50%, #d9dcec 64%, #d2e0fa 72%, #e0ebf7 80%, #e1ebf6); }
.weather { display: flex; align-items: center; gap: 11px; padding-left: 23px; }
.weather div, .lang, .clock { display: flex; flex-direction: column; line-height: 20px; }
.weather .dim { color: #5b616b; }
.weather-icon { position: relative; }
.weather-icon i { position: absolute; right: -6px; top: -3px; width: 20px; height: 20px; border-radius: 50%; background: #c42b1c; color: #fff; font-size: 13px; line-height: 20px; text-align: center; }
.dock { display: flex; align-items: center; margin-left: 5px; }
.app-icon { position: relative; width: 55px; height: 50px; }
.app-icon:first-child { width: 46px; margin-right: 8px; }
.search { display: flex; align-items: center; width: 275px; height: 39px; margin-right: 2px; padding: 0 5px 0 15px; border: 1px solid #c5cde2; border-radius: 20px; background: #f1f5fd; }
.search input { flex: 1; min-width: 0; margin-left: 11px; font-size: 17px; }
.search input::placeholder { color: #5b5f68; }
.tile { width: 48px; height: 48px; margin: 0 4px; border-radius: 6px; background: #ebf0fb; box-shadow: 0 0 2px #aab; }
.tile.alert { width: 50px; height: 50px; margin-left: 2px; background: #fce5e8; box-shadow: none; }
.tile::after, .run::after { content: ""; position: absolute; bottom: 0; width: 8px; height: 4px; border-radius: 2px; background: #7d828c; }
.tile.on::after { width: 20px; background: #0078d4; }
.tile.alert::after { background: #c42b1c; }
.badge { position: absolute; top: 3px; right: 3px; width: 20px; height: 20px; border-radius: 50%; color: #fff; font-size: 13px; line-height: 20px; text-align: center; }
.brown { background: #8d6e63; font-weight: 700; }
.red { background: #ef3e36; top: 5px; font-size: 15px; }
.tray { display: flex; align-items: center; justify-content: flex-end; padding-right: 25px; }
.lang { margin-left: 27px; }
.quick { gap: 10px; margin-left: 22px; }
.clock { align-items: flex-end; margin: 0 10px 0 20px; font-size: 15px; }
.copilot { position: relative; margin-left: 22px; }
.copilot i { position: absolute; right: 0; bottom: 1px; padding: 0 3px; border-radius: 2px; background: #fcc419; font-size: 8px; font-weight: 800; line-height: 9px; }
```
